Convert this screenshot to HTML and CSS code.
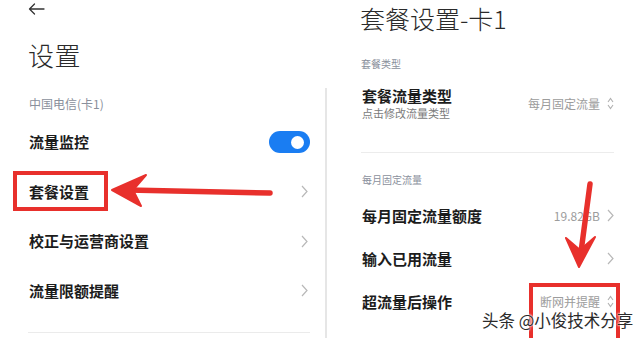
FILE: index.html
```html
<!DOCTYPE html>
<html lang="zh">
<head>
<meta charset="utf-8">
<title>设置</title>
<link rel="stylesheet" href="styles.css">
</head>
<body>
<div class="page">
  <section class="panel left">
    <div class="back">
      <svg width="17" height="12" viewBox="0 0 17 12"><path d="M16 6H1.5M6.5 1L1.5 6l5 5" fill="none" stroke="#333" stroke-width="1.3" stroke-linecap="round" stroke-linejoin="round"/></svg>
    </div>
    <h1 class="title">设置</h1>
    <div class="section">中国电信(卡1)</div>
    <div class="row">
      <span class="label">流量监控</span>
      <span class="toggle"><span class="knob"></span></span>
    </div>
    <div class="row">
      <span class="label">套餐设置</span>
      <svg class="chev" width="7" height="13" viewBox="0 0 7 13"><path d="M1 1l5 5.5L1 12" fill="none" stroke="#b8b8b8" stroke-width="1.2"/></svg>
    </div>
    <div class="row">
      <span class="label">校正与运营商设置</span>
      <svg class="chev" width="7" height="13" viewBox="0 0 7 13"><path d="M1 1l5 5.5L1 12" fill="none" stroke="#b8b8b8" stroke-width="1.2"/></svg>
    </div>
    <div class="row">
      <span class="label">流量限额提醒</span>
      <svg class="chev" width="7" height="13" viewBox="0 0 7 13"><path d="M1 1l5 5.5L1 12" fill="none" stroke="#b8b8b8" stroke-width="1.2"/></svg>
    </div>
    <div class="divider"></div>
  </section>

  <section class="panel right">
    <div class="rhead">
      <h1 class="title">套餐设置-卡1</h1>
      <div class="section small">套餐类型</div>
    </div>
    <div class="rbody">
      <div class="row2 type">
        <div class="stack">
          <span class="label">套餐流量类型</span>
          <span class="sub">点击修改流量类型</span>
        </div>
        <span class="value">每月固定流量
          <svg class="updown" width="7" height="13" viewBox="0 0 7 13"><path d="M1 5l2.5-3.5L6 5M1 8l2.5 3.5L6 8" fill="none" stroke="#b0b0b0" stroke-width="1.1"/></svg>
        </span>
      </div>
      <div class="hr"></div>
      <div class="section small sec2">每月固定流量</div>
      <div class="row2">
        <span class="label">每月固定流量额度</span>
        <span class="value">19.82GB
          <svg class="chev" width="7" height="13" viewBox="0 0 7 13"><path d="M1 1l5 5.5L1 12" fill="none" stroke="#b8b8b8" stroke-width="1.2"/></svg>
        </span>
      </div>
      <div class="row2">
        <span class="label">输入已用流量</span>
        <svg class="chev" width="7" height="13" viewBox="0 0 7 13"><path d="M1 1l5 5.5L1 12" fill="none" stroke="#b8b8b8" stroke-width="1.2"/></svg>
      </div>
      <div class="row2">
        <span class="label">超流量后操作</span>
        <span class="value">断网并提醒
          <svg class="updown" width="7" height="13" viewBox="0 0 7 13"><path d="M1 5l2.5-3.5L6 5M1 8l2.5 3.5L6 8" fill="none" stroke="#b0b0b0" stroke-width="1.1"/></svg>
        </span>
      </div>
    </div>
  </section>

  <svg class="marks" width="640" height="338" viewBox="0 0 640 338">
    <rect x="15" y="173" width="91" height="36" fill="none" stroke="#e8302c" stroke-width="4"/>
    <path d="M270 193 L128 190" stroke="#e8302c" stroke-width="5.5" stroke-linecap="round"/>
    <path d="M112 190 L146 175 L133 190 L141 206 Z" fill="#e8302c" stroke="#e8302c" stroke-width="2" stroke-linejoin="round"/>
    <rect x="531" y="285" width="87" height="70" fill="none" stroke="#e8302c" stroke-width="4"/>
    <path d="M590 184 L581 252" stroke="#e8302c" stroke-width="5.5" stroke-linecap="round"/>
    <path d="M579 267 L566 238 L580 250 L595 237 Z" fill="#e8302c" stroke="#e8302c" stroke-width="2" stroke-linejoin="round"/>
  </svg>
  <div class="watermark">头条 @小俊技术分享</div>
</div>
</body>
</html>
```

FILE: styles.css
```css
* { box-sizing: border-box; margin: 0; padding: 0; }
html, body { width: 640px; height: 338px; overflow: hidden; background: #fff; }
body {
  font-family: "Noto Sans CJK SC", "Noto Sans", sans-serif;
  color: #1c1c1c;
}
.page {
  position: relative;
  display: flex;
  width: 640px;
  height: 338px;
}
.panel { display: flex; flex-direction: column; }
.left { width: 325px; padding: 0 15px 0 28px; }
.right { flex: 1; }

.back { height: 20px; padding-top: 3px; display: flex; align-items: flex-start; }
.title {
  font-size: 26px;
  font-weight: 300;
  line-height: 30px;
  color: #2a2a2a;
  letter-spacing: 0.5px;
}
.left .title { margin-top: 20px; }
.section {
  font-size: 12px;
  line-height: 20px;
  color: #8a909c;
  margin-top: 23.5px;
  margin-bottom: 3.75px;
  padding-left: 1px;
}
.row {
  height: 49.5px;
  display: flex;
  align-items: center;
  justify-content: space-between;
}
.label { font-size: 15px; font-weight: 700; line-height: 20px; color: #1c1c1c; padding-left: 1px; }
.chev { display: block; flex: none; }
.toggle {
  width: 41px; height: 22px; border-radius: 11px;
  background: #1a7df2;
  display: flex; align-items: center; justify-content: flex-end;
  padding-right: 6px;
}
.knob { width: 13px; height: 13px; border-radius: 50%; background: #fff; }
.left .chev { margin-right: 2px; }
.divider { height: 1px; background: #ebebeb; margin-top: 17px; }

.rhead { padding-left: 35px; }
.rhead .title { margin-top: 2.5px; font-size: 25px; letter-spacing: 0; }
.section.small { font-size: 10px; line-height: 16px; margin: 0; padding-left: 1px; }
.rhead .section.small { margin-top: 23px; }
.rbody {
  margin-top: 16px;
  border-left: 2px solid #e6e6e6;
  padding: 0 26px 0 34px;
  flex: 1;
}
.row2 {
  height: 43px;
  display: flex;
  align-items: center;
  justify-content: space-between;
}
.row2.type { height: 54px; padding-bottom: 2px; margin-top: -10px; }
.stack { display: flex; flex-direction: column; }
.stack .label { line-height: 20px; }
.sub { font-size: 11px; line-height: 15px; color: #7a7a7a; padding-left: 1px; }
.value {
  display: flex; align-items: center; gap: 7px;
  font-size: 12px; color: #9c9c9c; line-height: 16px;
}
.hr { height: 1px; background: #ececec; margin-top: 20px; }
.sec2 { margin-top: 19.5px !important; margin-bottom: 6px !important; }
.updown { display: block; }

.marks { position: absolute; left: 0; top: 0; pointer-events: none; }
.watermark {
  position: absolute;
  left: 482px;
  top: 309px;
  font-size: 16.5px;
  line-height: 22px;
  color: #2b2b2b;
  white-space: nowrap;
  text-shadow: 0 0 2px #fff, 0 0 2px #fff, 0 0 3px #fff;
}
```
